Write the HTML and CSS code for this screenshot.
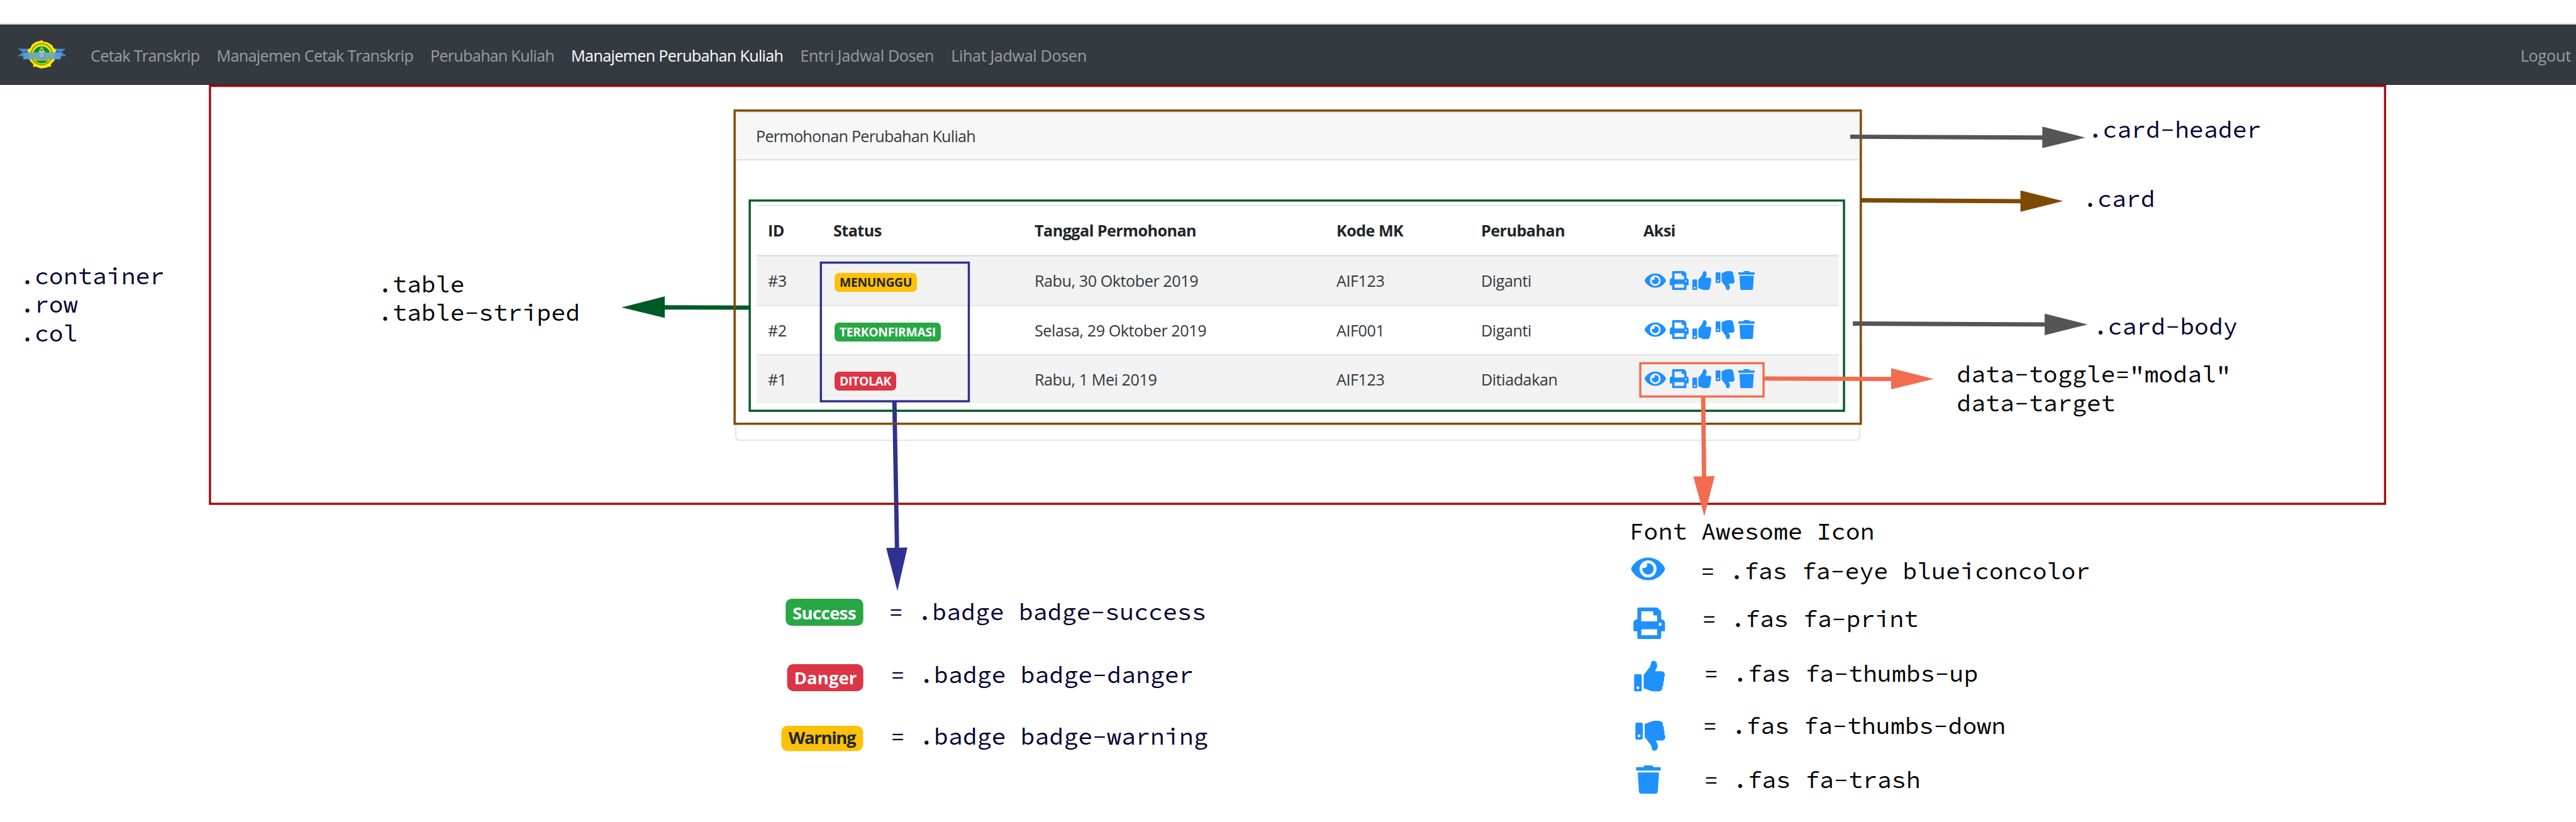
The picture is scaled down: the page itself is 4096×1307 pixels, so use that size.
FILE: index.html
```html
<!DOCTYPE html>
<html lang="id">
<head>
<meta charset="utf-8">
<title>Manajemen Perubahan Kuliah</title>
<link rel="stylesheet" href="styles.css">
</head>
<body>
<svg class="sprite" aria-hidden="true">
  <symbol id="fa-eye" viewBox="0 0 576 512"><path d="M572.52 241.4C518.29 135.59 410.93 64 288 64S57.68 135.64 3.48 241.41a32.35 32.35 0 0 0 0 29.19C57.71 376.41 165.07 448 288 448s230.32-71.64 284.52-177.41a32.35 32.35 0 0 0 0-29.19zM288 400a144 144 0 1 1 144-144 143.93 143.93 0 0 1-144 144zm0-240a95.31 95.31 0 0 0-25.31 3.79 47.85 47.85 0 0 1-66.9 66.9A95.78 95.78 0 1 0 288 160z"/></symbol>
  <symbol id="fa-print" viewBox="0 0 512 512"><path d="M448 192V77.25c0-8.49-3.37-16.62-9.37-22.63L393.37 9.37c-6-6-14.14-9.37-22.63-9.37H96C78.33 0 64 14.33 64 32v160c-35.35 0-64 28.65-64 64v112c0 8.84 7.16 16 16 16h48v96c0 17.67 14.33 32 32 32h320c17.67 0 32-14.33 32-32v-96h48c8.84 0 16-7.16 16-16V256c0-35.35-28.65-64-64-64zm-64 256H128v-96h256v96zm0-224H128V64h192v48c0 8.84 7.16 16 16 16h48v96zm48 72c-13.25 0-24-10.75-24-24 0-13.26 10.75-24 24-24s24 10.74 24 24c0 13.25-10.75 24-24 24z"/></symbol>
  <symbol id="fa-thumbs-up" viewBox="0 0 512 512"><path d="M104 224H24c-13.255 0-24 10.745-24 24v240c0 13.255 10.745 24 24 24h80c13.255 0 24-10.745 24-24V248c0-13.255-10.745-24-24-24zM64 472c-13.255 0-24-10.745-24-24s10.745-24 24-24 24 10.745 24 24-10.745 24-24 24zM384 81.452c0 42.416-25.97 66.208-33.277 94.548h101.723c33.397 0 59.397 27.746 59.553 58.098.084 17.938-7.546 37.249-19.439 49.197l-.11.11c9.836 23.337 8.237 56.037-9.308 79.469 8.681 25.895-.069 57.704-16.382 74.757 4.298 17.598 2.244 32.575-6.148 44.632C440.202 511.587 389.616 512 346.839 512l-2.845-.001c-48.287-.017-87.806-17.598-119.56-31.725-15.957-7.099-36.821-15.887-52.651-16.178-6.54-.12-11.783-5.457-11.783-11.998v-213.77c0-3.2 1.282-6.271 3.558-8.521 39.614-39.144 56.648-80.587 89.117-113.111 14.804-14.832 20.188-37.236 25.393-58.902C282.515 39.293 291.817 0 312 0c24 0 72 8 72 81.452z"/></symbol>
  <symbol id="fa-thumbs-down" viewBox="0 0 512 512"><path d="M0 56v240c0 13.255 10.745 24 24 24h80c13.255 0 24-10.745 24-24V56c0-13.255-10.745-24-24-24H24C10.745 32 0 42.745 0 56zm40 200c0-13.255 10.745-24 24-24s24 10.745 24 24-10.745 24-24 24-24-10.745-24-24zm272 256c-20.183 0-29.485-39.293-33.931-57.795-5.206-21.666-10.589-44.07-25.393-58.902-32.469-32.524-49.503-73.967-89.117-113.111a11.98 11.98 0 0 1-3.558-8.521V59.901c0-6.541 5.243-11.878 11.783-11.998 15.831-.29 36.694-9.079 52.651-16.178C256.189 17.598 295.709.017 343.995 0h2.844c42.777 0 93.363.413 113.774 29.737 8.392 12.057 10.446 27.034 6.148 44.632 16.312 17.053 25.063 48.863 16.382 74.757 17.544 23.432 19.143 56.132 9.308 79.469l.11.11c11.893 11.949 19.523 31.259 19.439 49.197-.156 30.352-26.157 58.098-59.553 58.098H350.723C358.03 364.34 384 388.132 384 430.548 384 504 336 512 312 512z"/></symbol>
  <symbol id="fa-trash" viewBox="0 0 448 512"><path d="M432 32H312l-9.4-18.7A24 24 0 0 0 281.1 0H166.8a23.72 23.72 0 0 0-21.4 13.3L136 32H16A16 16 0 0 0 0 48v32a16 16 0 0 0 16 16h416a16 16 0 0 0 16-16V48a16 16 0 0 0-16-16zM53.2 467a48 48 0 0 0 47.9 45h245.8a48 48 0 0 0 47.9-45L416 128H32z"/></symbol>
</svg>

<nav class="navbar">
  <svg class="brand" viewBox="115 170 350 210">
    <path fill="#4a86c5" d="M118 238H455l-30 24 36 27H118l38-27z"/>
    <path fill="#ffee00" d="M287 176l9 11 30 6 30 17 17 27 14 5-4 17-6 60-26 26 0 18-14-1-24 9-38 2-24-9-24-2 2-17-24-22-10-60-8-12 6-10 14-6 14-28 30-18 28-6z"/>
    <circle cx="287" cy="276" r="73" fill="none" stroke="#4d4a12" stroke-width="10" stroke-dasharray="6 5"/>
    <circle cx="287" cy="280" r="60" fill="#0b8f43"/>
    <path d="M287 228l48 88H240z" fill="#0b8f43" stroke="#c3dc2c" stroke-width="7" stroke-linejoin="round"/>
    <path fill="#fff" d="M272 256h30v12h-30z"/>
    <path fill="#5b9bd5" d="M158 264H420v42l-4 5H162l-4-5z"/>
    <path fill="#7fb09a" opacity=".75" d="M197 264H376v47H200z"/>
    <circle cx="287" cy="284" r="20" fill="#8fb4e0" stroke="#4f83c0" stroke-width="5" stroke-dasharray="7 4"/>
    <path fill="#2d5f93" d="M158 264l32-12v12zM420 264l-32-12v12z"/>
    <path fill="#c9cdd2" d="M280 370h14l-7 8z"/>
  </svg>
  <ul class="nav">
    <li>Cetak Transkrip</li>
    <li>Manajemen Cetak Transkrip</li>
    <li class="tight">Perubahan Kuliah</li>
    <li class="active">Manajemen Perubahan Kuliah</li>
    <li class="wide">Entri Jadwal Dosen</li>
    <li class="wide">Lihat Jadwal Dosen</li>
  </ul>
  <span class="logout">Logout</span>
</nav>

<main class="container">
  <section class="card">
    <header class="card-header">Permohonan Perubahan Kuliah</header>
    <div class="card-body">
      <table class="table">
        <colgroup><col class="c-id"><col class="c-status"><col class="c-date"><col class="c-code"><col class="c-change"><col></colgroup>
        <thead>
          <tr><th>ID</th><th>Status</th><th>Tanggal Permohonan</th><th>Kode MK</th><th>Perubahan</th><th>Aksi</th></tr>
        </thead>
        <tbody>
          <tr>
            <td>#3</td><td><span class="badge warning">MENUNGGU</span></td><td>Rabu, 30 Oktober 2019</td><td>AIF123</td><td>Diganti</td>
            <td><div class="actions"><svg class="eye"><use href="#fa-eye"/></svg><svg><use href="#fa-print"/></svg><svg><use href="#fa-thumbs-up"/></svg><svg><use href="#fa-thumbs-down"/></svg><svg class="trash"><use href="#fa-trash"/></svg></div></td>
          </tr>
          <tr>
            <td>#2</td><td><span class="badge success">TERKONFIRMASI</span></td><td>Selasa, 29 Oktober 2019</td><td>AIF001</td><td>Diganti</td>
            <td><div class="actions"><svg class="eye"><use href="#fa-eye"/></svg><svg><use href="#fa-print"/></svg><svg><use href="#fa-thumbs-up"/></svg><svg><use href="#fa-thumbs-down"/></svg><svg class="trash"><use href="#fa-trash"/></svg></div></td>
          </tr>
          <tr>
            <td>#1</td><td><span class="badge danger">DITOLAK</span></td><td>Rabu, 1 Mei 2019</td><td>AIF123</td><td>Ditiadakan</td>
            <td><div class="actions"><svg class="eye"><use href="#fa-eye"/></svg><svg><use href="#fa-print"/></svg><svg><use href="#fa-thumbs-up"/></svg><svg><use href="#fa-thumbs-down"/></svg><svg class="trash"><use href="#fa-trash"/></svg></div></td>
          </tr>
        </tbody>
      </table>
    </div>
  </section>
</main>

<svg class="annotations" viewBox="0 0 5956 1900" preserveAspectRatio="none">
  <!-- arrows that run below the outlines -->
  <g class="green"><path class="line" d="M1733 711L1537 710.5"/><path class="head" d="M1437 710.5L1537 685V735z"/></g>
  <g class="blue"><path class="line" d="M2068 928L2074 1268"/><path class="head" d="M2049 1266.500L2098 1265.500L2075 1366z"/></g>

  <!-- outlines -->
  <rect class="box red" x="485.500" y="198.500" width="5029" height="966"/>
  <rect class="box green" x="1733.500" y="463.500" width="2530" height="486"/>
  <rect class="box brown" x="1698.500" y="255.500" width="2604" height="724"/>
  <rect class="box blue" x="1898" y="607" width="342" height="320.500"/>
  <rect class="box orange" x="3792.500" y="839.500" width="285" height="77"/>

  <!-- arrows that run above the outlines -->
  <g class="brown"><path class="line" d="M4303 463L4672 465"/><path class="head" d="M4671.500 440V489.500L4770 465z"/></g>
  <g class="gray"><path class="line" d="M4278 316L4723 318"/><path class="head" d="M4722 292.500V342.500L4821.500 318z"/></g>
  <g class="gray"><path class="line" d="M4284 748L4728 750"/><path class="head" d="M4727.500 725V775L4827 750z"/></g>
  <g class="orange"><path class="line" d="M4079 875L4373 876"/><path class="head" d="M4372.500 851V900L4471 876z"/></g>
  <g class="orange"><path class="line" d="M3938 918L3940 1103"/><path class="head" d="M3915 1101.500L3964.500 1100.500L3940.500 1193z"/></g>

  <!-- labels -->
  <g class="label navy">
    <text x="46.500" y="657">.container</text>
    <text x="46.500" y="723">.row</text>
    <text x="46.500" y="789">.col</text>
    <text x="4828" y="318">.card-header</text>
    <text x="4816" y="479">.card</text>
    <text x="4840" y="774">.card-body</text>
    <text x="2055" y="1434">= .badge badge-success</text>
    <text x="2059" y="1579">= .badge badge-danger</text>
    <text x="2059" y="1721.500">= .badge badge-warning</text>
  </g>
  <g class="label">
    <text x="874" y="676">.table</text>
    <text x="874" y="742">.table-striped</text>
    <text x="4524" y="884">data-toggle="modal"</text>
    <text x="4524" y="951">data-target</text>
    <text x="3767" y="1247.500">Font Awesome Icon</text>
    <text x="3932" y="1339">= .fas fa-eye blueiconcolor</text>
    <text x="3935" y="1449">= .fas fa-print</text>
    <text x="3940" y="1576">= .fas fa-thumbs-up</text>
    <text x="3937" y="1696.500">= .fas fa-thumbs-down</text>
    <text x="3940" y="1821">= .fas fa-trash</text>
  </g>

  <!-- badge legend -->
  <g class="legend-badge">
    <rect x="1816.500" y="1384" width="179.500" height="62.500" rx="14" fill="#28a745"/>
    <text x="1832" y="1431.500" textLength="148" fill="#fff">Success</text>
    <rect x="1820" y="1535" width="176" height="62.500" rx="14" fill="#dc3545"/>
    <text x="1836" y="1582" textLength="145" fill="#fff">Danger</text>
    <rect x="1806.500" y="1677.500" width="189" height="58.500" rx="14" fill="#ffc107"/>
    <text x="1823" y="1720" textLength="157" fill="#212529">Warning</text>
  </g>

  <!-- icon legend -->
  <g class="legend-icon">
    <use href="#fa-eye" x="3771" y="1280" width="79" height="70"/>
    <use href="#fa-print" x="3776.500" y="1404" width="73.500" height="73.500"/>
    <use href="#fa-thumbs-up" x="3778" y="1527" width="71.500" height="71.500"/>
    <use href="#fa-thumbs-down" x="3781" y="1666" width="69.500" height="69.500"/>
    <use href="#fa-trash" x="3782.500" y="1769" width="57.500" height="65.500"/>
  </g>
</svg>
</body>
</html>
```
FILE: styles.css
```css
* { box-sizing: border-box; }

body {
  position: relative;
  margin: 0;
  padding-top: 37px;
  height: 1307px;
  overflow: hidden;
  background: #fff;
  color: #34383c;
  font: 25.2px/38px "Open Sans", "Noto Sans", sans-serif;
}

.sprite { display: none; }

/* top bar */
.navbar {
  display: flex;
  align-items: center;
  height: 98px;
  padding: 2px 8px 0 27px;
  border-top: 2.500px solid #dee0e4;
  border-bottom: 1px solid #23272b;
  background: #343a40;
  color: #9a9da0;
}
.brand { width: 80px; height: 48px; margin-top: -4px; }
.nav {
  display: flex;
  gap: 27px;
  margin: 0 0 0 37px;
  padding: 0;
  list-style: none;
  white-space: nowrap;
  letter-spacing: -.68px;
}
.nav .tight { letter-spacing: -.75px; }
.nav .wide { letter-spacing: -.36px; }
.nav .active { color: #fff; }
.logout { margin-left: auto; letter-spacing: -.2px; }

/* card */
.container { padding: 42px 0 0 1169px; }
.card {
  width: 1789px;
  height: 524px;
  border: 2px solid #e3e4e5;
  border-radius: 7px;
}
.card-header {
  height: 76px;
  padding: 18px 31px;
  border-bottom: 2px solid #dfdfdf;
  background: #f7f7f7;
  letter-spacing: -.74px;
}
.card-body { padding: 71px 32px 0; }

/* table */
.table {
  width: 1721px;
  table-layout: fixed;
  border-spacing: 0;
}
.c-id { width: 104px; }
.c-status { width: 320px; }
.c-date { width: 480px; }
.c-code { width: 230px; }
.c-change { width: 258px; }
.table th,
.table td {
  height: 78px;
  padding: 0 0 1px 18px;
  border-top: 2px solid #e2e5e8;
  text-align: left;
  letter-spacing: -.46px;
  white-space: nowrap;
}
.table th {
  height: 82px;
  border-bottom: 3px solid #dde1e5;
  color: #212529;
  font-weight: 700;
  letter-spacing: -.56px;
}
.table tbody tr:first-child td { height: 77px; border-top: 0; }
.table tbody tr:nth-child(odd) { background: #f2f2f2; }

.badge {
  display: inline-block;
  height: 30px;
  margin-left: 2px;
  padding: 0 8px;
  border-radius: 7px;
  font-size: 19.300px;
  font-weight: 700;
  line-height: 30px;
  letter-spacing: -.3px;
}
.success { background: #28a745; color: #fff; }
.danger { background: #dc3545; color: #fff; }
.warning { background: #ffc107; color: #212529; }

.actions { display: flex; gap: 6px; margin-left: 2px; fill: #1e90ff; }
.actions svg { width: 30.300px; height: 30.300px; }
.actions .eye { width: 34px; }
.actions .trash { width: 26.500px; }

/* annotation layer over the page */
.annotations {
  position: absolute;
  top: 0;
  left: 0;
  width: 4096px;
  height: 1307px;
}
.line { fill: none; stroke: currentColor; stroke-width: 10; }
.head { fill: currentColor; }
.box { fill: none; stroke: currentColor; stroke-width: 5; }
.red { color: #a00b10; }
.green { color: #005a26; }
.brown { color: #7f4a00; }
.blue { color: #2e3092; }
.orange { color: #f36c4f; }
.gray { color: #555; }

.label {
  fill: #000;
  font: 55.600px "Source Code Pro", "Liberation Mono", monospace;
  white-space: pre;
}
.navy { fill: #000033; }
.legend-badge { font: 700 40px "Open Sans", "Noto Sans", sans-serif; }
.legend-icon { fill: #1e90ff; }
```
